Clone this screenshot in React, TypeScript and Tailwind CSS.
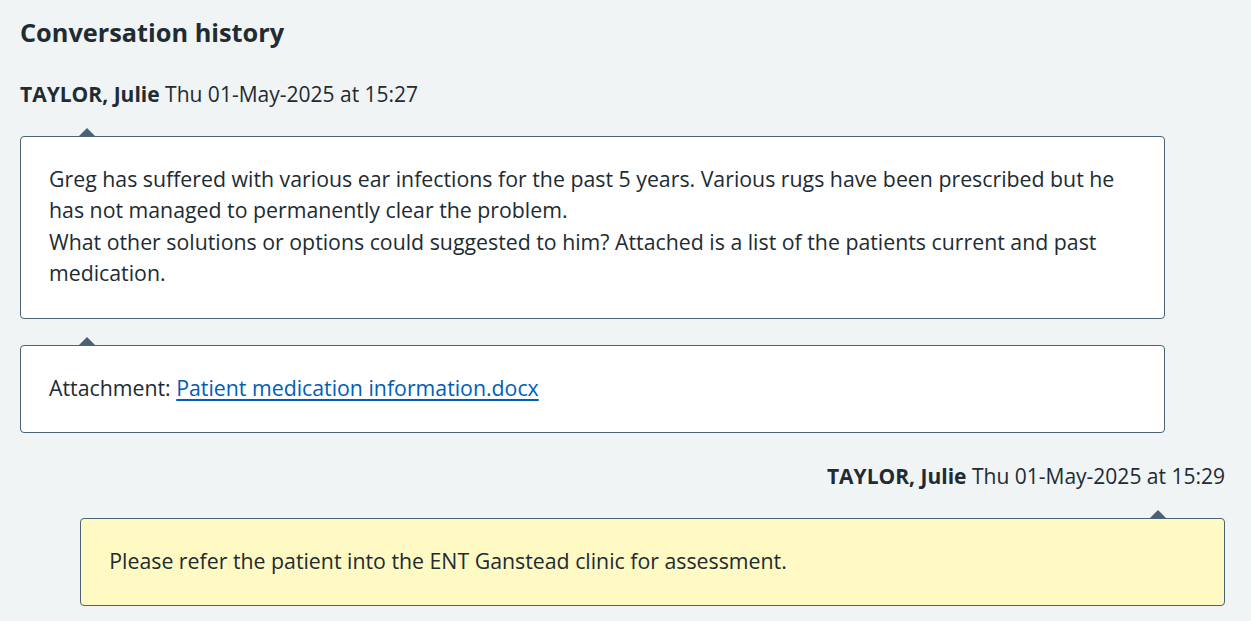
import React from 'react';

type Side = 'left' | 'right';

const Arrow: React.FC<{ side: Side }> = ({ side }) => (
  <div
    className={`absolute -top-[9px] h-0 w-0 border-x-[8px] border-b-[8px] border-x-transparent border-b-[#4c6272] ${
      side === 'left' ? 'left-[58px]' : 'right-[58px]'
    }`}
  />
);

const Bubble: React.FC<{ side?: Side; yellow?: boolean; children: React.ReactNode; className?: string }> = ({
  side = 'left',
  yellow = false,
  children,
  className = '',
}) => (
  <div
    className={`relative w-[95%] rounded-[4px] border border-[#4c6272] px-[28px] ${
      yellow ? 'bg-[#fff9c4]' : 'bg-white'
    } ${side === 'right' ? 'ml-auto' : ''} ${className}`}
  >
    <Arrow side={side} />
    {children}
  </div>
);

const MessageMeta: React.FC<{ name: string; when: string; align?: Side }> = ({ name, when, align = 'left' }) => (
  <p className={`text-[21px] leading-[31px] ${align === 'right' ? 'text-right' : ''}`}>
    <span className="font-bold">{name}</span> {when}
  </p>
);

export default function App() {
  return (
    <div
      className="min-h-screen bg-[#f0f4f5] pl-[20px] pr-[26px] pt-[12px] text-[#212b32]"
      style={{ fontFamily: '"Open Sans", "Noto Sans", Arial, sans-serif' }}
    >
      <h2 className="text-[25.3px] font-bold leading-[40px]">Conversation history</h2>

      <div className="mt-[27px]">
        <MessageMeta name="TAYLOR, Julie" when="Thu 01-May-2025 at 15:27" />
      </div>

      <Bubble className="mt-[26px] pt-[26px] pb-[30px]">
        <p className="text-[21.3px] leading-[31.3px]">
          Greg has suffered with various ear infections for the past 5 years. Various rugs have been prescribed but he
          has not managed to permanently clear the problem.
          <br />
          What other solutions or options could suggested to him? Attached is a list of the patients current and past
          medication.
        </p>
      </Bubble>

      <Bubble className="mt-[26px] pt-[26px] pb-[28px]">
        <p className="text-[21.3px] leading-[32px]">
          Attachment:{' '}
          <a href="#" className="text-[#005eb8] underline underline-offset-[3px]">
            Patient medication information.docx
          </a>
        </p>
      </Bubble>

      <div className="mt-[28px]">
        <MessageMeta name="TAYLOR, Julie" when="Thu 01-May-2025 at 15:29" align="right" />
      </div>

      <Bubble side="right" yellow className="mt-[26px] pt-[26px] pb-[28px]">
        <p className="text-[21.3px] leading-[32px]">Please refer the patient into the ENT Ganstead clinic for assessment.</p>
      </Bubble>
    </div>
  );
}
